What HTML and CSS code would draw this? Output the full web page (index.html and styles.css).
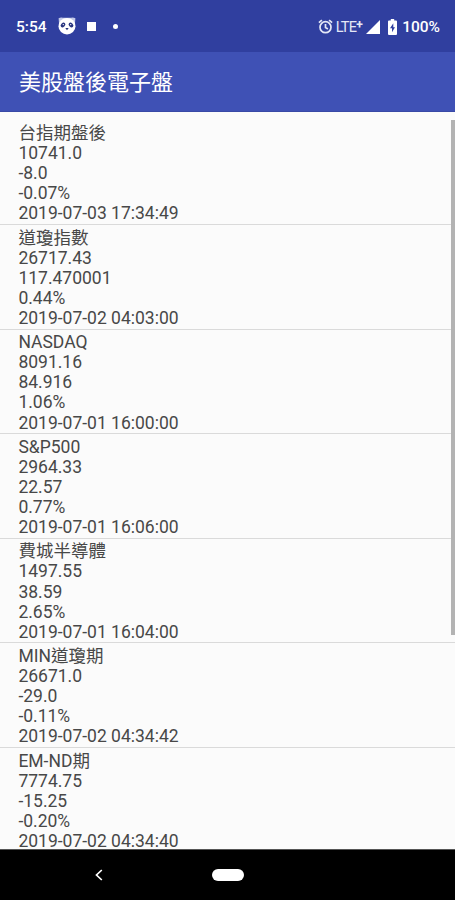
FILE: index.html
```html
<!DOCTYPE html>
<html lang="zh-Hant">
<head>
<meta charset="utf-8">
<title>美股盤後電子盤</title>
<link rel="stylesheet" href="styles.css">
</head>
<body>
<div class="phone">
  <header class="status">
    <div class="status-left">
      <span class="clock">5:54</span>
      <svg class="panda" width="18" height="18" viewBox="0 0 18 18">
        <path d="M.6 1.200Q3 0 5 .8h8q2-.8 4.400.4L17 6H1z" fill="#c3c9e8"/>
        <ellipse cx="9" cy="9.200" rx="8.500" ry="8.300" fill="#fff"/>
        <ellipse cx="5" cy="8" rx="2.600" ry="2" transform="rotate(-40 5 8)" fill="#27347f"/>
        <ellipse cx="13" cy="8" rx="2.600" ry="2" transform="rotate(40 13 8)" fill="#27347f"/>
        <circle cx="5.300" cy="7.600" r=".7" fill="#fff"/><circle cx="12.700" cy="7.600" r=".7" fill="#fff"/>
        <path d="M7.300 11h3.400L9 13.200z" fill="#27347f"/>
      </svg>
      <span class="square"></span>
      <span class="dot"></span>
    </div>
    <div class="status-right">
      <svg width="15" height="15" viewBox="0 0 15 15" fill="none" stroke="#e4e7f6" stroke-width="1.7">
        <circle cx="7.5" cy="8.2" r="5.500"/><path d="M7.5 5v3.6l2.4 1.4M.9 3.6 3.9 1.1M14.1 3.6l-3-2.5"/>
      </svg>
      <span class="lte">LTE<sup>+</sup></span>
      <svg class="signal" width="14" height="14" viewBox="0 0 14 14"><path d="M14 0v14H0z" fill="#fff"/></svg>
      <svg class="battery" width="9" height="16" viewBox="0 0 9 16">
        <path d="M2.8 0h3.4v1.6H8q1 0 1 1V15q0 1-1 1H1q-1 0-1-1V2.600q0-1 1-1h1.800z" fill="#fff"/>
        <path d="M5.300 4.300 2 9.300h2v3.900l3-5H5.300z" fill="#303f9f"/>
      </svg>
      <span class="percent">100%</span>
    </div>
  </header>
  <div class="appbar"><h1>美股盤後電子盤</h1></div>
  <main class="list">
    <section class="quote"><p>台指期盤後</p><p>10741.0</p><p>-8.0</p><p>-0.07%</p><p>2019-07-03 17:34:49</p></section>
    <section class="quote"><p>道瓊指數</p><p>26717.43</p><p>117.470001</p><p>0.44%</p><p>2019-07-02 04:03:00</p></section>
    <section class="quote"><p>NASDAQ</p><p>8091.16</p><p>84.916</p><p>1.06%</p><p>2019-07-01 16:00:00</p></section>
    <section class="quote"><p>S&amp;P500</p><p>2964.33</p><p>22.57</p><p>0.77%</p><p>2019-07-01 16:06:00</p></section>
    <section class="quote"><p>費城半導體</p><p>1497.55</p><p>38.59</p><p>2.65%</p><p>2019-07-01 16:04:00</p></section>
    <section class="quote"><p>MIN道瓊期</p><p>26671.0</p><p>-29.0</p><p>-0.11%</p><p>2019-07-02 04:34:42</p></section>
    <section class="quote"><p>EM-ND期</p><p>7774.75</p><p>-15.25</p><p>-0.20%</p><p>2019-07-02 04:34:40</p></section>
    <div class="scrollbar"></div>
  </main>
  <nav class="navbar">
    <svg class="back" width="8" height="12" viewBox="0 0 8 12" fill="none" stroke="#fff" stroke-width="1.7"><path d="M6.800 1 1.500 6l5.300 5"/></svg>
    <span class="home"></span>
  </nav>
</div>
</body>
</html>
```
FILE: styles.css
```css
* { box-sizing: border-box; }
body { margin: 0; }
h1, p { margin: 0; font-weight: 400; }
.phone {
  width: 455px;
  height: 900px;
  display: flex;
  flex-direction: column;
  overflow: hidden;
  background: #fbfbfb;
  font-family: Roboto, "Noto Sans CJK TC", sans-serif;
}
.status {
  flex: 0 0 52px;
  display: flex;
  justify-content: space-between;
  padding: 0 15px 0 16px;
  background: #303f9f;
  color: #fff;
  font-size: 15.5px;
  font-weight: 500;
}
.status-left, .status-right { display: flex; align-items: center; }
.clock, .percent, .lte { position: relative; top: 1px; }
.panda { margin-left: 11px; }
.square { width: 9px; height: 9px; margin-left: 11px; background: #fff; }
.dot { width: 5px; height: 5px; margin-left: 17px; border-radius: 50%; background: #fff; }
.status-right svg { margin-top: 1px; }
.lte {
  margin-left: 3px;
  font-size: 14.5px;
  font-weight: 400;
  letter-spacing: -0.7px;
  color: #e4e7f6;
}
.lte sup { font-size: 12px; line-height: 0; vertical-align: 3px; font-weight: 700; }
.signal { margin-left: 4px; }
.battery { margin-left: 8px; }
.percent { margin-left: 5px; }
.appbar {
  flex: 0 0 60px;
  display: flex;
  align-items: center;
  padding: 2px 0 0 19px;
  background: #3f51b5;
  border-bottom: 1px solid #3949a6;
  color: #fff;
}
.appbar h1 { font-size: 22px; line-height: 32px; }
.list {
  position: relative;
  flex: 1 1 0;
  min-height: 0;
  padding-top: 8.5px;
  overflow: hidden;
  color: #484848;
  font-size: 17.5px;
}
.quote {
  height: 104.6px;
  padding: 2.5px 18px 0 18.4px;
  border-bottom: 1px solid #dadada;
}
.quote p { height: 20.1px; line-height: 20.1px; white-space: nowrap; }
.scrollbar {
  position: absolute;
  top: 8px;
  right: 0;
  width: 4px;
  height: 515px;
  background: #b3b3b3;
}
.navbar {
  flex: 0 0 51px;
  display: flex;
  align-items: center;
  background: #000;
  border-top: 1px solid #555;
}
.back { margin-left: 95px; }
.home { width: 32px; height: 12px; margin-left: 109px; border-radius: 6px; background: #fff; }
```
